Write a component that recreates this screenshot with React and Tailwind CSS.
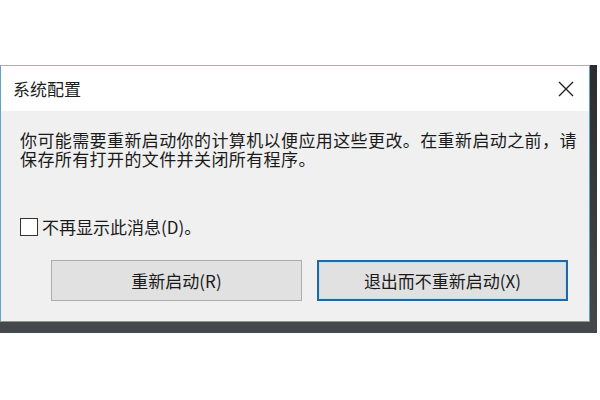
import { useState } from 'react';

const App = () => {
  const [dontShow, setDontShow] = useState(false);

  return (
    <div
      className="w-[600px] h-[400px] bg-white pt-[65px] overflow-hidden"
      style={{ fontFamily: '"Noto Sans CJK SC", "Noto Sans", sans-serif' }}
    >
      {/* desktop peeking out at right/bottom */}
      <div className="w-[597px] bg-gradient-to-b from-[#2a2d31] to-[#45484c] pr-[7px] pb-[11px]">
        <div className="w-[590px] border border-[#5ea3cc] border-t-[#86b9d2] bg-[#f0f0f0]">
          {/* Title bar */}
          <div className="h-[45px] bg-white flex items-center justify-between pl-[12px] pr-[14px]">
            <span className="text-[17px] text-[#1e1e1e] leading-none">系统配置</span>
            <button className="w-[18px] h-[18px] flex items-center justify-center text-[#222]">
              <svg width="16" height="16" viewBox="0 0 16 16" fill="none" stroke="currentColor" strokeWidth="1.4">
                <path d="M1 1 L15 15 M15 1 L1 15" />
              </svg>
            </button>
          </div>

          {/* Body */}
          <div className="pt-[19px] pl-[19px] pr-[21px] pb-[20px]">
            <p className="text-[17px] leading-[19px] text-[#1a1a1a] tracking-[0.4px] whitespace-nowrap">
              你可能需要重新启动你的计算机以便应用这些更改。在重新启动之前，请
              <br />
              保存所有打开的文件并关闭所有程序。
            </p>

            <label className="mt-[50px] flex items-center gap-[4px] cursor-pointer select-none">
              <span
                onClick={() => setDontShow(!dontShow)}
                className="w-[18px] h-[18px] border-[1.5px] border-[#333] bg-white flex items-center justify-center"
              >
                {dontShow && (
                  <svg width="12" height="12" viewBox="0 0 12 12" fill="none" stroke="#222" strokeWidth="1.6">
                    <path d="M1.5 6.5 L4.5 9.5 L10.5 2.5" />
                  </svg>
                )}
              </span>
              <span className="text-[17px] leading-[18px] text-[#1a1a1a]">不再显示此消息(D)。</span>
            </label>

            <div className="mt-[24px] flex justify-end gap-[15px]">
              <button className="w-[251px] h-[41px] bg-[#e1e1e1] border border-[#adadad] text-[17px] text-[#1a1a1a]">
                重新启动(R)
              </button>
              <button className="w-[251px] h-[41px] bg-[#e1e1e1] border-2 border-[#24679c] shadow-[inset_0_0_0_1px_#bfe0f5] text-[17px] text-[#1a1a1a]">
                退出而不重新启动(X)
              </button>
            </div>
          </div>
        </div>
      </div>
    </div>
  );
};

export default App;
